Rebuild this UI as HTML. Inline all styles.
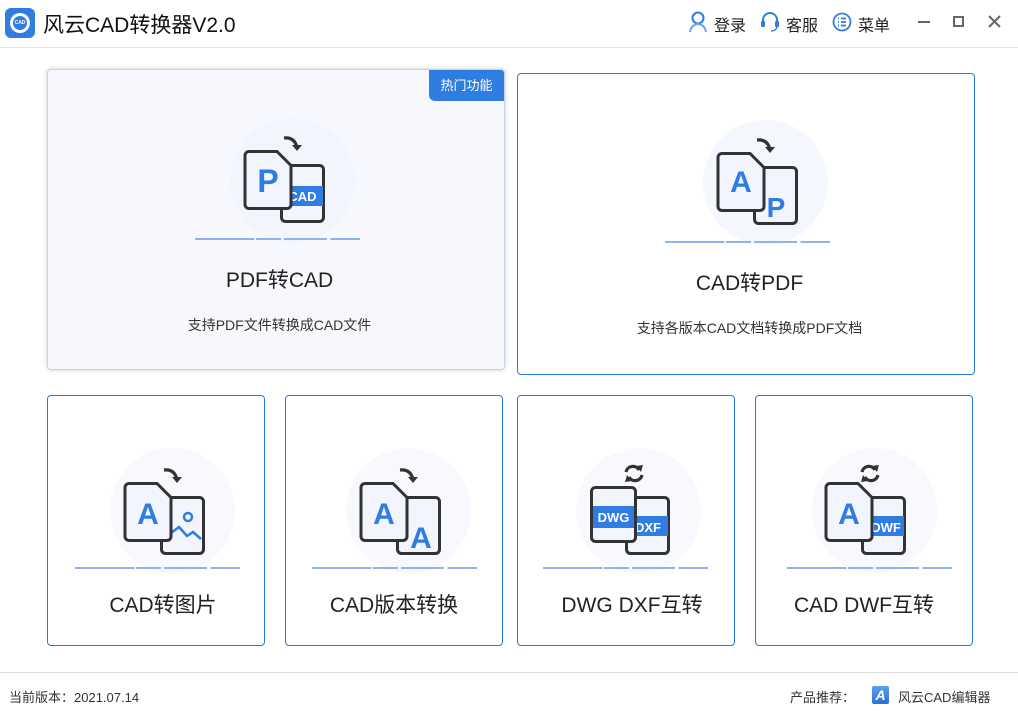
<!DOCTYPE html>
<html><head><meta charset="utf-8"><style>
*{margin:0;padding:0;box-sizing:border-box}
body{width:1018px;height:713px;background:#fff;position:relative;overflow:hidden;font-family:"Liberation Sans","Noto Sans CJK SC",sans-serif;color:#222}
.a{position:absolute}
.card{position:absolute;border:1px solid #2b7ad8;border-radius:4px;background:#fff;overflow:hidden}
.t{position:absolute;text-align:center;white-space:nowrap}
.blob{position:absolute;border-radius:50%;background:#f1f3fd}
.ln{position:absolute;height:2px;background:linear-gradient(90deg,#8fb3ef 0 36%,transparent 36% 37%,#8fb3ef 37% 52%,transparent 52% 54%,#8fb3ef 54% 80%,transparent 80% 82%,#8fb3ef 82%)}
</style></head><body>
<!-- header -->
<div class="a" style="left:5px;top:8px;width:30px;height:30px;border-radius:6px;background:#2f7de1"></div>
<div class="a" style="left:10px;top:13px;width:20px;height:20px;border-radius:50%;background:#fff"></div>
<div class="a" style="left:13px;top:16px;width:14px;height:14px;border-radius:50%;background:#2f7de1;color:#fff;font-size:5px;line-height:14px;text-align:center;font-weight:bold">CAD</div>
<div class="t" style="left:43px;top:9px;font-size:21px;color:#111">风云CAD转换器V2.0</div>
<svg class="a" style="left:688px;top:11px" width="20" height="22" viewBox="0 0 20 22"><circle cx="10" cy="7" r="5.5" fill="none" stroke="#2f7de1" stroke-width="2"/><path d="M2 21 q1 -7 8 -8 q7 1 8 8" fill="none" stroke="#6fa3ef" stroke-width="2"/></svg>
<div class="t" style="left:714px;top:12px;font-size:16px">登录</div>
<svg class="a" style="left:760px;top:11px" width="20" height="22" viewBox="0 0 20 22"><path d="M3 13 v-4 a7 7 0 0 1 14 0 v4" fill="none" stroke="#2f7de1" stroke-width="2"/><rect x="1" y="10" width="4" height="6" rx="1" fill="#2f7de1"/><rect x="15" y="10" width="4" height="6" rx="1" fill="#2f7de1"/><path d="M17 16 q-1 4 -6 4" fill="none" stroke="#2f7de1" stroke-width="1.5"/></svg>
<div class="t" style="left:786px;top:12px;font-size:16px">客服</div>
<svg class="a" style="left:832px;top:12px" width="20" height="20" viewBox="0 0 20 20"><circle cx="10" cy="10" r="8.5" fill="none" stroke="#2f7de1" stroke-width="1.8"/><path d="M6 6.5h1M9 6.5h5M6 10h1M9 10h5M6 13.5h1M9 13.5h5" stroke="#2f7de1" stroke-width="1.8"/></svg>
<div class="t" style="left:858px;top:12px;font-size:16px">菜单</div>
<div class="a" style="left:918px;top:21px;width:12px;height:2px;background:#666"></div>
<div class="a" style="left:953px;top:16px;width:11px;height:11px;border:2px solid #666"></div>
<svg class="a" style="left:988px;top:15px" width="13" height="13"><path d="M1 1L12 12M12 1L1 12" stroke="#666" stroke-width="2"/></svg>
<div class="a" style="left:0;top:47px;width:1018px;height:1px;background:#e2e2e2"></div>

<!-- cards -->
<div class="card" style="left:47px;top:69px;width:458px;height:301px;background:#f7f8fe;border-color:#c9d2e8;box-shadow:0 0 4px rgba(0,0,0,.2)">
<div class="a" style="right:0;top:0;width:75px;height:31px;background:#2f7de1;border-bottom-left-radius:6px;color:#fff;font-size:13px;line-height:31px;text-align:center">热门功能</div></div>
<div class="card" style="left:517px;top:73px;width:458px;height:302px"></div>
<div class="card" style="left:47px;top:395px;width:218px;height:251px"></div>
<div class="card" style="left:285px;top:395px;width:218px;height:251px"></div>
<div class="card" style="left:517px;top:395px;width:218px;height:251px"></div>
<div class="card" style="left:755px;top:395px;width:218px;height:251px"></div>

<!-- blobs -->
<div class="blob" style="left:230px;top:118px;width:125px;height:125px;opacity:.7"></div>
<div class="blob" style="left:703px;top:120px;width:125px;height:125px;opacity:.7"></div>
<div class="blob" style="left:110px;top:448px;width:125px;height:125px;opacity:.5"></div>
<div class="blob" style="left:346px;top:448px;width:125px;height:125px;opacity:.5"></div>
<div class="blob" style="left:576px;top:448px;width:125px;height:125px;opacity:.5"></div>
<div class="blob" style="left:812px;top:448px;width:125px;height:125px;opacity:.5"></div>

<svg width="0" height="0" style="position:absolute"><defs>
<g id="arr"><path d="M49 8 q11 -1 13 10" fill="none" stroke="#333" stroke-width="3.2"/><path d="M57 15 l5 6 l5 -6z" fill="#333"/></g>
<g id="rot"><path d="M46 10 a7 7 0 0 1 13 -2" fill="none" stroke="#333" stroke-width="3.2"/><path d="M56 4 l5 6 l2 -7z" fill="#333"/><path d="M62 13 a7 7 0 0 1 -13 2" fill="none" stroke="#333" stroke-width="3.2"/><path d="M52 19 l-5 -6 l-2 7z" fill="#333"/></g>
<rect id="back" x="46.5" y="35.5" width="42" height="56" rx="4" fill="#f2f5fd" stroke="#333" stroke-width="3"/>
<path id="front" d="M14 21.5 h28 l14 14 v39 a4 4 0 0 1 -4 4 h-38 a4 4 0 0 1 -4 -4 v-49 a4 4 0 0 1 4 -4z" fill="#f2f5fd" stroke="#333" stroke-width="3"/>
</defs></svg>

<svg class="a" style="left:235px;top:130px" width="100" height="95"><use href="#arr"/><use href="#back"/><rect x="47" y="56" width="41" height="20" fill="#2f7de1"/><text x="67.5" y="71" font-size="13" font-weight="bold" fill="#fff" text-anchor="middle" font-family="Liberation Sans">CAD</text><use href="#front"/><text x="33" y="62" font-size="32" font-weight="bold" fill="#2f7de1" text-anchor="middle" font-family="Liberation Sans">P</text></svg>
<svg class="a" style="left:708px;top:132px" width="100" height="95"><use href="#arr"/><use href="#back"/><text x="68" y="85" font-size="28" font-weight="bold" fill="#2f7de1" text-anchor="middle" font-family="Liberation Sans">P</text><use href="#front"/><text x="33" y="60" font-size="30" font-weight="bold" fill="#2f7de1" text-anchor="middle" font-family="Liberation Sans">A</text></svg>
<svg class="a" style="left:115px;top:462px" width="100" height="95"><use href="#arr"/><use href="#back"/><circle cx="73" cy="55" r="4" fill="none" stroke="#2f7de1" stroke-width="2.5"/><path d="M56 71 l8 -6 l8 9 l6 -4 l8 7" fill="none" stroke="#2f7de1" stroke-width="2.5"/><use href="#front"/><text x="33" y="62" font-size="30" font-weight="bold" fill="#2f7de1" text-anchor="middle" font-family="Liberation Sans">A</text></svg>
<svg class="a" style="left:351px;top:462px" width="100" height="95"><use href="#arr"/><use href="#back"/><text x="70" y="86" font-size="30" font-weight="bold" fill="#2f7de1" text-anchor="middle" font-family="Liberation Sans">A</text><use href="#front"/><text x="33" y="62" font-size="30" font-weight="bold" fill="#2f7de1" text-anchor="middle" font-family="Liberation Sans">A</text></svg>
<svg class="a" style="left:580px;top:462px" width="100" height="95"><use href="#rot"/><use href="#back"/><rect x="47" y="54" width="41" height="20" fill="#2f7de1"/><text x="68" y="70" font-size="13" font-weight="bold" fill="#fff" text-anchor="middle" font-family="Liberation Sans">DXF</text><rect x="11.5" y="25.5" width="44" height="54" rx="4" fill="#f2f5fd" stroke="#333" stroke-width="3"/><rect x="13" y="44" width="41" height="22" fill="#2f7de1"/><text x="33.5" y="60" font-size="13" font-weight="bold" fill="#fff" text-anchor="middle" font-family="Liberation Sans">DWG</text></svg>
<svg class="a" style="left:816px;top:462px" width="100" height="95"><use href="#rot"/><use href="#back"/><rect x="47" y="54" width="41" height="20" fill="#2f7de1"/><text x="70" y="70" font-size="13" font-weight="bold" fill="#fff" text-anchor="middle" font-family="Liberation Sans">DWF</text><use href="#front"/><text x="33" y="62" font-size="30" font-weight="bold" fill="#2f7de1" text-anchor="middle" font-family="Liberation Sans">A</text></svg>

<div class="ln" style="left:195px;top:238px;width:165px"></div>
<div class="ln" style="left:665px;top:241px;width:165px"></div>
<div class="ln" style="left:75px;top:567px;width:165px"></div>
<div class="ln" style="left:312px;top:567px;width:165px"></div>
<div class="ln" style="left:543px;top:567px;width:165px"></div>
<div class="ln" style="left:787px;top:567px;width:165px"></div>

<div class="t" style="left:47px;width:465px;top:264px;font-size:21px">PDF转CAD</div>
<div class="t" style="left:47px;width:465px;top:315px;font-size:14px;color:#333">支持PDF文件转换成CAD文件</div>
<div class="t" style="left:517px;width:465px;top:267px;font-size:21px">CAD转PDF</div>
<div class="t" style="left:517px;width:465px;top:318px;font-size:14px;color:#333">支持各版本CAD文档转换成PDF文档</div>
<div class="t" style="left:54px;width:218px;top:589px;font-size:21px">CAD转图片</div>
<div class="t" style="left:285px;width:218px;top:589px;font-size:21px">CAD版本转换</div>
<div class="t" style="left:523px;width:218px;top:589px;font-size:21px">DWG DXF互转</div>
<div class="t" style="left:755px;width:218px;top:589px;font-size:21px">CAD DWF互转</div>

<div class="a" style="left:0;top:672px;width:1018px;height:1px;background:#ddd"></div>
<div class="t" style="left:9px;top:687px;font-size:13px;color:#333">当前版本：2021.07.14</div>
<div class="t" style="left:790px;top:687px;font-size:13px;color:#333">产品推荐：</div>
<div class="a" style="left:872px;top:686px;width:17px;height:18px;border-radius:2px;background:linear-gradient(#5aa0f0,#2f6fd0);color:#fff;font-size:14px;font-weight:bold;font-style:italic;text-align:center;line-height:18px">A</div>
<div class="t" style="left:898px;top:687px;font-size:13px;color:#333">风云CAD编辑器</div>
</body></html>
